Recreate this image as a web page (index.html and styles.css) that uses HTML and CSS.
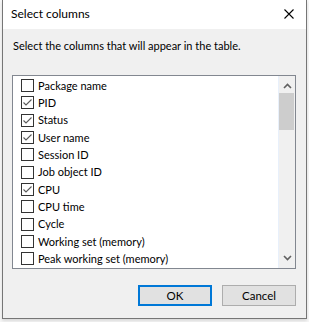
FILE: index.html
```html
<!DOCTYPE html>
<html>
<head>
<meta charset="utf-8">
<link rel="stylesheet" href="styles.css">
</head>
<body>
<div class="dialog">
  <div class="titlebar">
    <span class="title">Select columns</span>
    <svg class="close" width="10" height="10" viewBox="0 0 10 10"><path d="M0.5 0.5 L9.5 9.5 M9.5 0.5 L0.5 9.5" stroke="#000" stroke-width="1.1" fill="none"/></svg>
  </div>
  <div class="content">
    <p class="desc">Select the columns that will appear in the table.</p>
    <div class="listbox">
      <ul class="items">
        <li class="item"><span class="box"></span><span class="label">Package name</span></li>
        <li class="item"><span class="box checked"><svg width="11" height="11" viewBox="0 0 11 11"><path d="M1.5 5.5 L4 8 L9.5 2.5" stroke="#5a5a5a" stroke-width="1.1" fill="none"/></svg></span><span class="label">PID</span></li>
        <li class="item"><span class="box checked"><svg width="11" height="11" viewBox="0 0 11 11"><path d="M1.5 5.5 L4 8 L9.5 2.5" stroke="#5a5a5a" stroke-width="1.1" fill="none"/></svg></span><span class="label">Status</span></li>
        <li class="item"><span class="box checked"><svg width="11" height="11" viewBox="0 0 11 11"><path d="M1.5 5.5 L4 8 L9.5 2.5" stroke="#5a5a5a" stroke-width="1.1" fill="none"/></svg></span><span class="label">User name</span></li>
        <li class="item"><span class="box"></span><span class="label">Session ID</span></li>
        <li class="item"><span class="box"></span><span class="label">Job object ID</span></li>
        <li class="item"><span class="box checked"><svg width="11" height="11" viewBox="0 0 11 11"><path d="M1.5 5.5 L4 8 L9.5 2.5" stroke="#5a5a5a" stroke-width="1.1" fill="none"/></svg></span><span class="label">CPU</span></li>
        <li class="item"><span class="box"></span><span class="label">CPU time</span></li>
        <li class="item"><span class="box"></span><span class="label">Cycle</span></li>
        <li class="item"><span class="box"></span><span class="label">Working set (memory)</span></li>
        <li class="item"><span class="box"></span><span class="label">Peak working set (memory)</span></li>
        <li class="item"><span class="box"></span></li>
      </ul>
      <div class="scrollbar">
        <svg class="arrow" width="9" height="6" viewBox="0 0 9 6"><path d="M1 5 L4.5 1.5 L8 5" stroke="#606060" stroke-width="1.6" fill="none"/></svg>
        <div class="track"><div class="thumb"></div></div>
        <svg class="arrow" width="9" height="6" viewBox="0 0 9 6"><path d="M1 1 L4.5 4.5 L8 1" stroke="#606060" stroke-width="1.6" fill="none"/></svg>
      </div>
    </div>
    <div class="buttons">
      <button class="btn btn-default">OK</button>
      <button class="btn">Cancel</button>
    </div>
  </div>
</div>
</body>
</html>
```
FILE: styles.css
```css
* { box-sizing: border-box; }
html, body { margin: 0; padding: 0; }
body {
  background: #f7f7f7;
  font-family: Lato, "Noto Sans", sans-serif;
  font-size: 11px;
  color: #000;
  width: 309px;
  height: 322px;
  overflow: hidden;
}
.dialog {
  margin-left: 2px;
  width: 305px;
  height: 319px;
  border: 1px solid #767676;
  border-top: none;
  background: #f0f0f0;
  display: flex;
  flex-direction: column;
  box-shadow: 0 2px 3px rgba(0,0,0,0.12);
}
.titlebar {
  height: 29px;
  background: #fff;
  display: flex;
  align-items: center;
  justify-content: space-between;
  padding: 0 12px 0 8px;
}
.title { font-size: 12px; line-height: 16px; margin-top: -1px; }
.close { display: block; margin-top: -1px; }
.content {
  flex: 1;
  padding: 8px 10px 0 9px;
  display: flex;
  flex-direction: column;
}
.desc { margin: 0; line-height: 16px; padding-top: 1px; padding-left: 1px; }
.listbox {
  margin-top: 21px;
  height: 194px;
  border: 1px solid #828790;
  background: #fff;
  display: flex;
  overflow: hidden;
}
.items {
  list-style: none;
  margin: 0;
  padding: 1px 0 0 0;
  flex: 1;
  overflow: hidden;
}
.item {
  height: 17.333px;
  display: flex;
  align-items: center;
  padding-left: 8px;
  white-space: nowrap;
}
.box {
  width: 13px;
  height: 13px;
  border: 1px solid #333;
  background: #fff;
  flex: none;
  display: flex;
  align-items: center;
  justify-content: center;
}
.box svg { display: block; }
.label { margin-left: 4px; line-height: 16px; }
.scrollbar {
  width: 17px;
  flex: none;
  background: #f0f0f0;
  border-left: 1px solid #e8f0fb;
  display: flex;
  flex-direction: column;
  align-items: center;
}
.arrow { display: block; margin: 7px 0 4px; }
.scrollbar .arrow:last-child { margin: 5px 0 7px; }
.track { flex: 1; width: 100%; }
.thumb { width: 15px; height: 37px; background: #cdcdcd; }
.buttons {
  display: flex;
  justify-content: flex-end;
  gap: 10px;
  margin-top: 16px;
}
.btn {
  width: 74px;
  height: 21px;
  font-family: inherit;
  font-size: 11.5px;
  color: #000;
  background: #e1e1e1;
  border: 1px solid #adadad;
  padding: 0;
  line-height: 17px;
}
.btn-default { border: 2px solid #0078d7; }
```
